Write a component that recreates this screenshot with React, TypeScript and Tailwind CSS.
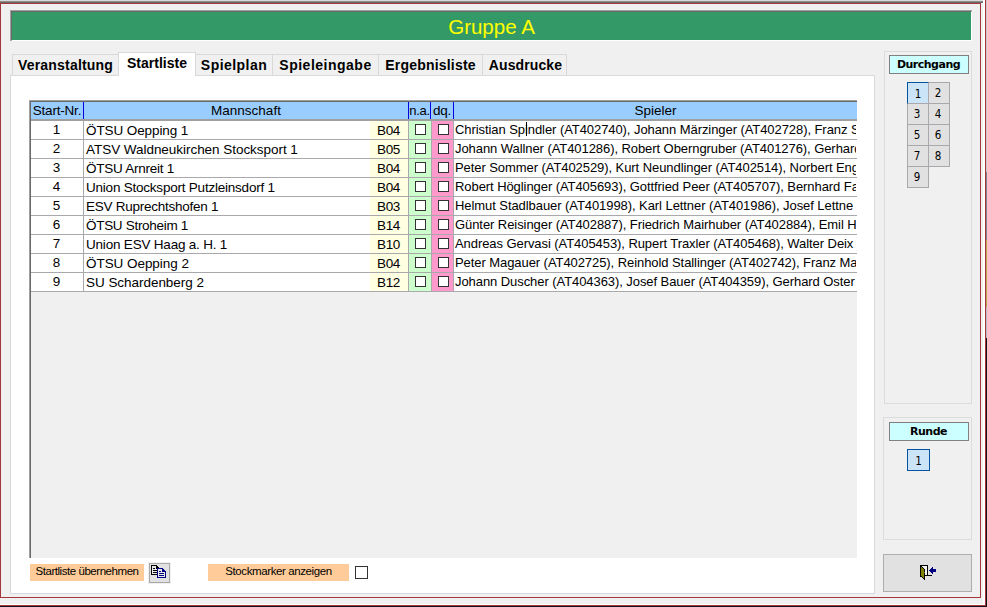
import type { ReactNode } from "react";

const GDI = "font-['Liberation_Sans',Arial,sans-serif]";
const UI = "font-['DejaVu_Sans',sans-serif]";
const DIGITS = "font-['DejaVu_Sans_Condensed','DejaVu_Sans',sans-serif]";

const rows = [
  { nr: 1, team: "ÖTSU Oepping 1", w: "tracking-[-0.1px]", b: "B04", players: "Christian Spindler (AT402740), Johann Märzinger (AT402728), Franz S" },
  { nr: 2, team: "ATSV Waldneukirchen Stocksport 1", w: "tracking-[-0.04px]", b: "B05", players: "Johann Wallner (AT401286), Robert Oberngruber (AT401276), Gerhard" },
  { nr: 3, team: "ÖTSU Arnreit 1", w: "tracking-[-0.25px]", b: "B04", players: "Peter Sommer (AT402529), Kurt Neundlinger (AT402514), Norbert Eng" },
  { nr: 4, team: "Union Stocksport Putzleinsdorf 1", w: "tracking-[-0.22px]", b: "B04", players: "Robert Höglinger (AT405693), Gottfried Peer (AT405707), Bernhard Fa" },
  { nr: 5, team: "ESV Ruprechtshofen 1", w: "tracking-[-0.25px]", b: "B03", players: "Helmut Stadlbauer (AT401998), Karl Lettner (AT401986), Josef Lettne" },
  { nr: 6, team: "ÖTSU Stroheim 1", w: "tracking-[-0.3px]", b: "B14", players: "Günter Reisinger (AT402887), Friedrich Mairhuber (AT402884), Emil H" },
  { nr: 7, team: "Union ESV Haag a. H. 1", w: "tracking-[-0.2px]", b: "B10", players: "Andreas Gervasi (AT405453), Rupert Traxler (AT405468), Walter Deix" },
  { nr: 8, team: "ÖTSU Oepping 2", w: "tracking-[-0.05px]", b: "B04", players: "Peter Magauer (AT402725), Reinhold Stallinger (AT402742), Franz Ma" },
  { nr: 9, team: "SU Schardenberg 2", w: "tracking-[-0.04px]", b: "B12", players: "Johann Duscher (AT404363), Josef Bauer (AT404359), Gerhard Oster" },
];

const tabs = [
  { label: "Veranstaltung", cls: "w-[106px] border-l tracking-[0.2px]" },
  { label: "Startliste", cls: "", active: true },
  { label: "Spielplan", cls: "w-[77px] border-r tracking-[0.45px]" },
  { label: "Spieleingabe", cls: "w-[106px] border-r tracking-[0.5px]" },
  { label: "Ergebnisliste", cls: "w-[104px] border-r tracking-[0.2px]" },
  { label: "Ausdrucke", cls: "w-[84px] border-r pl-[2px] tracking-[0.1px]" },
];

function Box() {
  return <span className="block size-[11px] border border-[#333] bg-white" />;
}

function GroupLabel({ children }: { children: ReactNode }) {
  return (
    <div className={`h-[19px] w-20 border border-[#808080] bg-[#ccffff] pr-px text-center text-[11px] leading-[17px] font-bold tracking-[-0.5px] ${UI}`}>
      {children}
    </div>
  );
}

function CopyIcon() {
  return (
    <svg width="16" height="14" viewBox="0 0 16 14" shapeRendering="crispEdges">
      <path d="M0 0h6v1h1v1h1v1h1v7H0z" fill="#000" />
      <path d="M1 1h4v3h3v5H1z" fill="#e8e8e8" />
      <path d="M2 3h2v1H2zM2 5h4v1H2zM2 7h4v1H2z" fill="#000" />
      <path d="M6 3h6v1h1v1h1v1h1v7H6z" fill="#000080" />
      <path d="M7 4h4v3h3v5H7z" fill="#e8e8e8" />
      <path d="M8 6h2v1H8zM8 8h5v1H8zM8 10h5v1H8z" fill="#000080" />
    </svg>
  );
}

function ExitIcon() {
  return (
    <svg width="16" height="15" viewBox="0 0 16 15" shapeRendering="crispEdges">
      <path d="M0 0h8v10h4v1H5V1H0z" fill="#000" />
      <path d="M2 1h5v9H5V3H4V2H2z" fill="#f4f4f4" />
      <path d="M0 0h1v1h1v1h1v1h1v1h1v11H4v-1H3v-1H2v-1H0z" fill="#000" />
      <path d="M1 2h1v1h1v1h1v3h1v1H4v5H3v-1H2v-1H1z" fill="#808000" />
      <path d="M9 5h1V4h1V3h1V2h1v2h3v3h-3v2h-1V8h-1V7h-1V6H9z" fill="#000080" />
    </svg>
  );
}

export default function App() {
  return (
    <div className={`flex h-[607px] w-[987px] flex-col overflow-hidden bg-[#f0f0f0] text-black ${GDI}`}>
      <div className="flex h-[606px]">
        <div className="h-[606px] w-[986px] border-r border-b border-[#a4373a]">
          <div className="h-[605px] w-[985px] border-r-2 border-b border-white">
            <div className="h-px bg-[#d9d9d9]" />
            <div className="h-px bg-[#8c8c8c]" />
            <div className="h-px bg-[#696969]" />
            <div className="flex h-[595px] w-[981px] flex-col border border-[#a4373a] pt-1.5 pl-[9px]">
              <header className="h-[31px] w-[962px] shrink-0 border-t border-l border-[#a0a0a0]">
                <div className="h-[30px] w-[961px] border border-t-[#696969] border-r-white border-b-white border-l-[#696969] bg-[#339966] text-center text-[20.5px] leading-[29px] text-[#ffff00]">
                  Gruppe A
                </div>
              </header>

              <div className="flex">
                <div className="flex w-[865px] shrink-0 flex-col pt-[11px]">
                  <nav className="flex h-[23px] items-end pl-0.5">
                    {tabs.map((t) =>
                      t.active ? (
                        <div key={t.label} className="z-10 -mb-px h-6 w-[78px] border border-b-0 border-[#d9d9d9] bg-white text-center text-[14px] leading-[21px] font-bold">
                          {t.label}
                        </div>
                      ) : (
                        <div key={t.label} className={`h-[21px] border-t border-[#d9d9d9] text-center text-[14px] leading-[21px] font-bold ${t.cls}`}>
                          {t.label}
                        </div>
                      ),
                    )}
                  </nav>
                  <main className="h-[519px] border border-[#d9d9d9] bg-white pt-6 pl-[18px]">
                    <div className="h-[458px] w-[828px] border-t border-l border-[#a0a0a0]">
                      <div className="h-[457px] w-[827px] overflow-hidden border-t border-l border-[#696969] bg-[#f0f0f0]">
                        <div className="flex h-[19px] w-[826px] border-b-2 border-[#a0a0a0] bg-[#99ccff] text-center text-[13.5px] leading-[17px]">
                          <div className="w-[53px] border-r border-[#0000e0] tracking-[-0.2px] whitespace-nowrap">Start-Nr.</div>
                          <div className="w-[325px] border-r border-[#0000e0]">Mannschaft</div>
                          <div className="w-[22px] border-r border-[#0000e0] text-[13px] tracking-[-0.3px] whitespace-nowrap">n.a.</div>
                          <div className="w-[23px] border-r border-[#0000e0] tracking-[-0.2px]">dq.</div>
                          <div className="flex-1">Spieler</div>
                        </div>
                        {rows.map((r) => (
                          <div key={r.nr} className="flex h-[19px] w-[826px] border-b border-[#a9a9ad] bg-white text-[13.5px] leading-[18px] whitespace-nowrap">
                            <div className="w-[53px] border-r border-[#a9a9ad] pr-px text-center leading-[17px]">{r.nr}</div>
                            <div className={`w-[286px] pl-[2px] leading-[20px] ${r.w}`}>{r.team}</div>
                            <div className="w-[39px] border-r border-[#a9a9ad] bg-[#ffffe1] pr-px text-center leading-[20px] tracking-[-0.3px]">{r.b}</div>
                            <div className="w-[23px] border-r border-[#a9a9ad] bg-[#ccffcc] pt-[3px] pl-1.5"><Box /></div>
                            <div className="w-[22px] border-r border-[#a9a9ad] bg-[#ff99cc] pt-[3px] pl-1.5"><Box /></div>
                            <div className="relative w-[402px] overflow-hidden pl-px text-[13px] leading-[18px] tracking-[-0.07px]">
                              {r.players}
                              {r.nr === 1 && <span className="absolute top-px left-[72px] h-[14px] w-px bg-black" />}
                            </div>
                          </div>
                        ))}
                      </div>
                    </div>
                    <div className="flex items-start pt-[5px] pl-px text-center text-[11.5px] whitespace-nowrap">
                      <div className="mt-px h-[17px] w-[114px] bg-[#ffcc99] leading-[15px] tracking-[-0.45px]">Startliste übernehmen</div>
                      <button className="ml-[5px] flex h-[20px] w-[21px] border border-[#a9a9a9] bg-[#e1e1e1] pt-px pl-px outline outline-[#f0f0f0]"><CopyIcon /></button>
                      <div className="mt-px ml-[38px] h-[17px] w-[141px] bg-[#ffcc99] leading-[15px] tracking-[-0.4px]">Stockmarker anzeigen</div>
                      <div className="mt-[3px] ml-1.5 size-[13px] border border-[#333] bg-white" />
                    </div>
                  </main>
                </div>

                <aside className="ml-2 w-[89px] pt-[10px]">
                  <section className="ml-px h-[353px] w-[88px] border border-[#dcdcdc] pt-[3px] pl-1">
                    <GroupLabel>Durchgang</GroupLabel>
                    <div className={`mt-2 ml-[18px] flex w-[44px] flex-wrap text-center text-[11.5px] leading-[21px] ${DIGITS}`}>
                      {[1, 2, 3, 4, 5, 6, 7, 8, 9].map((n) => (
                        <div
                          key={n}
                          className={
                            n === 1
                              ? "z-10 -mr-px -mb-px size-[22px] border border-[#a9a9ad] border-t-[#0054a0] border-l-[#0054a0] bg-[#cce4f7] leading-[22px]"
                              : "-mr-px -mb-px size-[22px] border border-[#a9a9ad] bg-[#e1e1e1] pr-[2px]"
                          }
                        >
                          {n}
                        </div>
                      ))}
                    </div>
                  </section>
                  <section className="mt-[13px] h-[123px] w-[89px] border border-[#dcdcdc] pt-1 pl-[5px]">
                    <GroupLabel>Runde</GroupLabel>
                    <div className={`mt-2 ml-[18px] h-[22px] w-[23px] border border-[#0054a0] bg-[#cce4f7] text-center text-[11.5px] leading-[22px] ${DIGITS}`}>1</div>
                  </section>
                  <button className="mt-[14px] flex h-[38px] w-[89px] border border-[#adadad] bg-[#e1e1e1] pt-2.5 pl-9">
                    <ExitIcon />
                  </button>
                </aside>
              </div>
            </div>
            <div className="h-[5px]" />
          </div>
        </div>
        <div className="flex w-px flex-col">
          <div className="h-[172px] bg-[#c8c8c8]" />
          <div className="h-[68px] bg-[#7d8790]" />
          <div className="h-[67px] bg-[#c0a850]" />
          <div className="h-[31px] bg-[#b8bcc4]" />
          <div className="flex-1 bg-[#111]" />
        </div>
      </div>
      <div className="h-px bg-[#14101c]" />
    </div>
  );
}
